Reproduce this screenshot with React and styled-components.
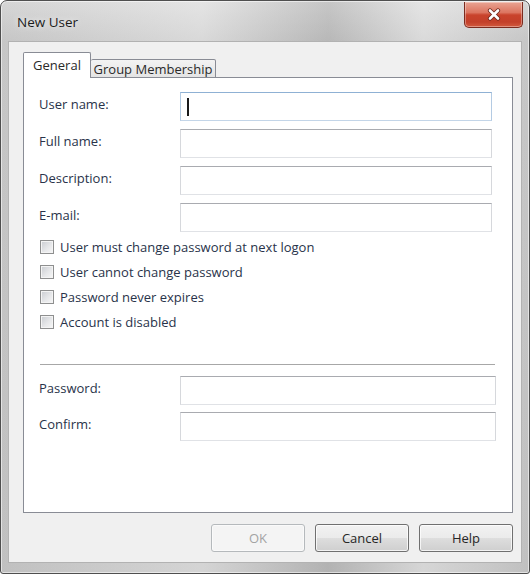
import React from "react";
import styled, { createGlobalStyle } from "styled-components";

const GlobalStyle = createGlobalStyle`
  html, body { margin: 0; padding: 0; background: #ffffff; }
  body { font-family: "Open Sans", "Noto Sans", sans-serif; }
  * { box-sizing: border-box; }
`;

const Window = styled.div`
  width: 530px;
  height: 574px;
  display: flex;
  flex-direction: column;
  border: 1px solid #4f4f4f;
  border-radius: 7px 7px 3px 3px;
  padding: 0 7px 10px 7px;
  background:
    linear-gradient(90deg, rgba(0,0,0,0.02) 0%, rgba(255,255,255,0.28) 38%, rgba(0,0,0,0.09) 62%, rgba(255,255,255,0.3) 80%, rgba(0,0,0,0.02) 100%),
    linear-gradient(#dadada, #cacaca 40px, #c4c4c4);
  box-shadow: inset 0 0 0 1px rgba(255,255,255,0.55);
`;

const TitleBar = styled.div`
  height: 40px;
  display: flex;
  justify-content: space-between;
  align-items: flex-start;
`;

const Title = styled.div`
  padding: 12px 0 0 9px;
  font-size: 13.5px;
  line-height: 18px;
  color: #1c1c1c;
  text-shadow: 0 0 6px rgba(255,255,255,0.9);
`;

const CloseButton = styled.div`
  width: 59px;
  height: 26px;
  margin-top: 1px;
  margin-right: -1px;
  display: flex;
  align-items: center;
  justify-content: center;
  border: 1px solid #7b2b1f;
  border-top: none;
  border-radius: 0 0 5px 5px;
  background: linear-gradient(#e9a493 0%, #dc7560 42%, #c9432c 52%, #c3402a 80%, #d25a3e 100%);
  box-shadow: inset 0 0 0 1px rgba(255,255,255,0.35);
`;

const Client = styled.div`
  flex: 1;
  display: flex;
  flex-direction: column;
  background: #f0f0f0;
  border: 1px solid #b2b2b2;
  padding: 10px 8px 10px 14px;
`;

const TabStrip = styled.div`
  display: flex;
  align-items: flex-end;
  height: 26px;
  margin-bottom: -1px;
  position: relative;
  z-index: 1;
`;

const Tab = styled.div`
  display: flex;
  align-items: center;
  justify-content: center;
  width: ${(p) => p.$width}px;
  height: ${(p) => (p.$active ? 26 : 19)}px;
  border: 1px solid #898c95;
  border-bottom: ${(p) => (p.$active ? "none" : "1px solid #898c95")};
  border-left: ${(p) => (p.$active ? "1px solid #898c95" : "none")};
  border-radius: 2px 2px 0 0;
  background: ${(p) => (p.$active ? "#ffffff" : "linear-gradient(#f3f3f3, #e4e4e4)")};
  padding-bottom: ${(p) => (p.$active ? 2 : 0)}px;
  font-size: 13px;
  color: #2a2a2a;
`;

const Panel = styled.div`
  flex: 1;
  display: flex;
  flex-direction: column;
  background: #ffffff;
  border: 1px solid #898c95;
  padding: 14px 16px 0 15px;
`;

const Fields = styled.div`
  display: grid;
  grid-template-columns: 141px 1fr;
  row-gap: ${(p) => p.$gap}px;
  margin-right: ${(p) => p.$inset}px;
`;

const Label = styled.div`
  padding-top: 3px;
  font-size: 13px;
  line-height: 18px;
  color: #29334a;
`;

const TextBox = styled.div`
  height: 29px;
  display: flex;
  align-items: center;
  border: 1px solid;
  border-color: ${(p) =>
    p.$focused ? "#8fb1d4 #b4cbe3 #c3d5e8 #b4cbe3" : "#a9abb0 #d6d8dc #e0e2e6 #d6d8dc"};
  background: #fff;
`;

const Caret = styled.span`
  width: 2px;
  height: 18px;
  margin-left: 6px;
  background: #1a1a1a;
`;

const CheckList = styled.div`
  margin-top: 2px;
  display: flex;
  flex-direction: column;
`;

const CheckRow = styled.div`
  height: 25px;
  display: flex;
  align-items: center;
  gap: 6px;
  padding-left: 1px;
  font-size: 13px;
  color: #29334a;
`;

const CheckBox = styled.span`
  width: 14px;
  height: 14px;
  border: 1px solid #8e8f8f;
  background: linear-gradient(135deg, #c9ccd1 0%, #e6e7e9 55%, #f7f7f7 100%);
  box-shadow: inset 0 0 0 1px #f4f4f4;
`;

const Separator = styled.div`
  margin: 30px 1px 10px 1px;
  border-top: 1px solid #a7a7a7;
  border-bottom: 1px solid #ffffff;
`;

const ButtonRow = styled.div`
  margin-top: 11px;
  display: flex;
  justify-content: flex-end;
  gap: 10px;
`;

const Button = styled.div`
  width: 94px;
  height: 28px;
  display: flex;
  align-items: center;
  justify-content: center;
  border: 1px solid ${(p) => (p.$disabled ? "#b5b9bc" : "#707070")};
  border-radius: 3px;
  background: ${(p) =>
    p.$disabled
      ? "#f4f4f4"
      : "linear-gradient(#f2f2f2 0%, #ebebeb 48%, #dddddd 52%, #cfcfcf 100%)"};
  box-shadow: inset 0 0 0 1px ${(p) => (p.$disabled ? "#fafafa" : "rgba(255,255,255,0.75)")};
  font-size: 13px;
  color: ${(p) => (p.$disabled ? "#a3a3a3" : "#262626")};
`;

const CloseGlyph = () => (
  <svg width="14" height="13" viewBox="0 0 14 13">
    <path d="M3 2.5 L11 10.5 M11 2.5 L3 10.5" stroke="#6e261b" strokeWidth="4.2" strokeLinecap="round" />
    <path d="M3 2.5 L11 10.5 M11 2.5 L3 10.5" stroke="#ffffff" strokeWidth="2.6" strokeLinecap="round" />
  </svg>
);

const topFields = ["User name:", "Full name:", "Description:", "E-mail:"];
const options = [
  "User must change password at next logon",
  "User cannot change password",
  "Password never expires",
  "Account is disabled",
];
const bottomFields = ["Password:", "Confirm:"];

export default function App() {
  return (
    <>
      <GlobalStyle />
      <Window>
        <TitleBar>
          <Title>New User</Title>
          <CloseButton>
            <CloseGlyph />
          </CloseButton>
        </TitleBar>
        <Client>
          <TabStrip>
            <Tab $active $width={68}>General</Tab>
            <Tab $width={125}>Group Membership</Tab>
          </TabStrip>
          <Panel>
            <Fields $gap={8} $inset={4}>
              {topFields.map((f, i) => (
                <React.Fragment key={f}>
                  <Label>{f}</Label>
                  <TextBox $focused={i === 0}>{i === 0 && <Caret />}</TextBox>
                </React.Fragment>
              ))}
            </Fields>
            <CheckList>
              {options.map((o) => (
                <CheckRow key={o}>
                  <CheckBox />
                  {o}
                </CheckRow>
              ))}
            </CheckList>
            <Separator />
            <Fields $gap={7} $inset={0}>
              {bottomFields.map((f) => (
                <React.Fragment key={f}>
                  <Label>{f}</Label>
                  <TextBox />
                </React.Fragment>
              ))}
            </Fields>
          </Panel>
          <ButtonRow>
            <Button $disabled>OK</Button>
            <Button>Cancel</Button>
            <Button>Help</Button>
          </ButtonRow>
        </Client>
      </Window>
    </>
  );
}
